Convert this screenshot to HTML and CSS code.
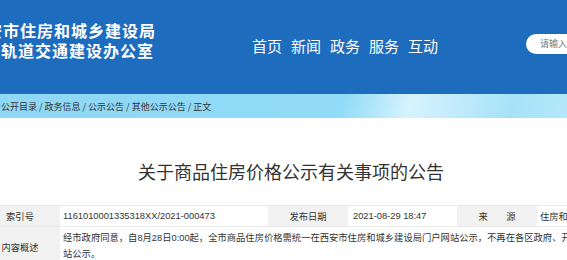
FILE: index.html
```html
<!DOCTYPE html>
<html lang="zh-CN">
<head>
    <meta charset="UTF-8">
    <meta name="viewport" content="width=device-width, initial-scale=1.0">
    <title>关于商品住房价格公示有关事项的公告</title>
    <link rel="stylesheet" href="styles.css">
</head>
<body>
    <!-- Top header -->
    <div class="header">
        <div class="site-name">
            <div class="line"><span>西安市住房和城乡建设局</span></div>
            <div class="line"><span>西安市城市轨道交通建设办公室</span></div>
        </div>
        <ul class="nav">
            <li>首页</li>
            <li>新闻</li>
            <li>政务</li>
            <li>服务</li>
            <li>互动</li>
        </ul>
        <div class="search">请输入搜索内容</div>
    </div>

    <!-- Breadcrumb -->
    <div class="crumb">
        <span>公开目录</span><i>/</i><span>政务信息</span><i>/</i><span>公示公告</span><i>/</i><span>其他公示公告</span><i>/</i><span>正文</span>
    </div>

    <!-- Article -->
    <div class="article">
        <h1 class="title">关于商品住房价格公示有关事项的公告</h1>
        <table class="meta">
            <tr>
                <td class="label">索引号</td>
                <td class="value w-index">1161010001335318XX/2021-000473</td>
                <td class="label">发布日期</td>
                <td class="value w-date">2021-08-29 18:47</td>
                <td class="label">来&emsp;&emsp;源</td>
                <td class="value">住房和城乡建设局</td>
            </tr>
            <tr>
                <td class="label">内容概述</td>
                <td class="value summary" colspan="5">经市政府同意，自8月28日0:00起，全市商品住房价格需统一在西安市住房和城乡建设局门户网站公示，不再在各区政府、开发区管委会网站公示。</td>
            </tr>
        </table>
    </div>
</body>
</html>
```

FILE: styles.css
```css
/* Reset */
* {
    margin: 0;
    padding: 0;
    box-sizing: border-box;
}

body {
    font-family: "Liberation Sans", "Noto Sans CJK SC", sans-serif;
    color: #333;
    background-color: #ffffff;
    overflow: hidden;
}

/* Header */
.header {
    display: flex;
    align-items: flex-start;
    height: 94px;
    background-color: #1e6cbd;
    color: #ffffff;
    overflow: hidden;
}

.site-name {
    flex: none;
    width: 156px;
    margin-top: 20px;
    overflow: hidden;
    font-family: "Noto Sans CJK SC", sans-serif;
    font-size: 16px;
    font-weight: bold;
    line-height: 20px;
    letter-spacing: 1px;
}

/* keep the end of each line visible, clip the start */
.site-name .line {
    display: flex;
    justify-content: flex-end;
    white-space: nowrap;
}

.site-name .line span {
    flex: none;
}

.site-name .line + .line {
    padding-right: 2px;
}

.nav {
    display: flex;
    gap: 9px;
    list-style: none;
    margin-left: 96px;
    margin-top: 36px;
    font-family: "Noto Sans CJK SC", sans-serif;
    font-size: 15px;
    line-height: 20px;
    white-space: nowrap;
}

.search {
    flex: none;
    width: 120px;
    height: 20px;
    margin-left: 88px;
    margin-top: 34px;
    padding-left: 14px;
    background-color: #ffffff;
    border-radius: 10px;
    color: #777;
    font-family: "Noto Sans CJK SC", sans-serif;
    font-size: 9px;
    line-height: 20px;
    white-space: nowrap;
}

/* Breadcrumb */
.crumb {
    height: 24px;
    padding-left: 1px;
    background: linear-gradient(105deg, #8fd8f5 0%, #90dbf7 60%, #d6f3fd 72%, #c2ebfb 80%, #a5e2f8 90%, #b6e8fa 100%);
    font-family: "Noto Sans CJK SC", sans-serif;
    font-size: 9px;
    line-height: 25px;
    color: #333;
    white-space: nowrap;
}

.crumb i {
    font-style: normal;
    margin: 0 2px;
}

/* Article */
.article {
    width: 622px;
    margin-left: -20px;
}

.title {
    margin-top: 40px;
    font-family: "Noto Sans CJK SC", sans-serif;
    font-size: 18px;
    font-weight: normal;
    line-height: 26px;
    text-align: center;
    color: #333;
}

.meta {
    width: 652px;
    margin-top: 21px;
    border-collapse: collapse;
    table-layout: fixed;
    font-family: "Liberation Sans", "Noto Sans CJK SC", sans-serif;
    font-size: 9.3px;
    white-space: nowrap;
}

.meta td {
    border-top: 1px solid #ebebeb;
    height: 21px;
    vertical-align: middle;
}

.meta .label {
    width: 80px;
    background-color: #f1f1f1;
    text-align: center;
}

.meta .value {
    padding-left: 3px;
    background-color: #ffffff;
}

.meta .w-index {
    width: 208px;
}

.meta .w-date {
    width: 109px;
    padding-left: 5px;
}

.meta .summary {
    white-space: normal;
    padding: 3px 1px 4px 3px;
    line-height: 16px;
}
```
